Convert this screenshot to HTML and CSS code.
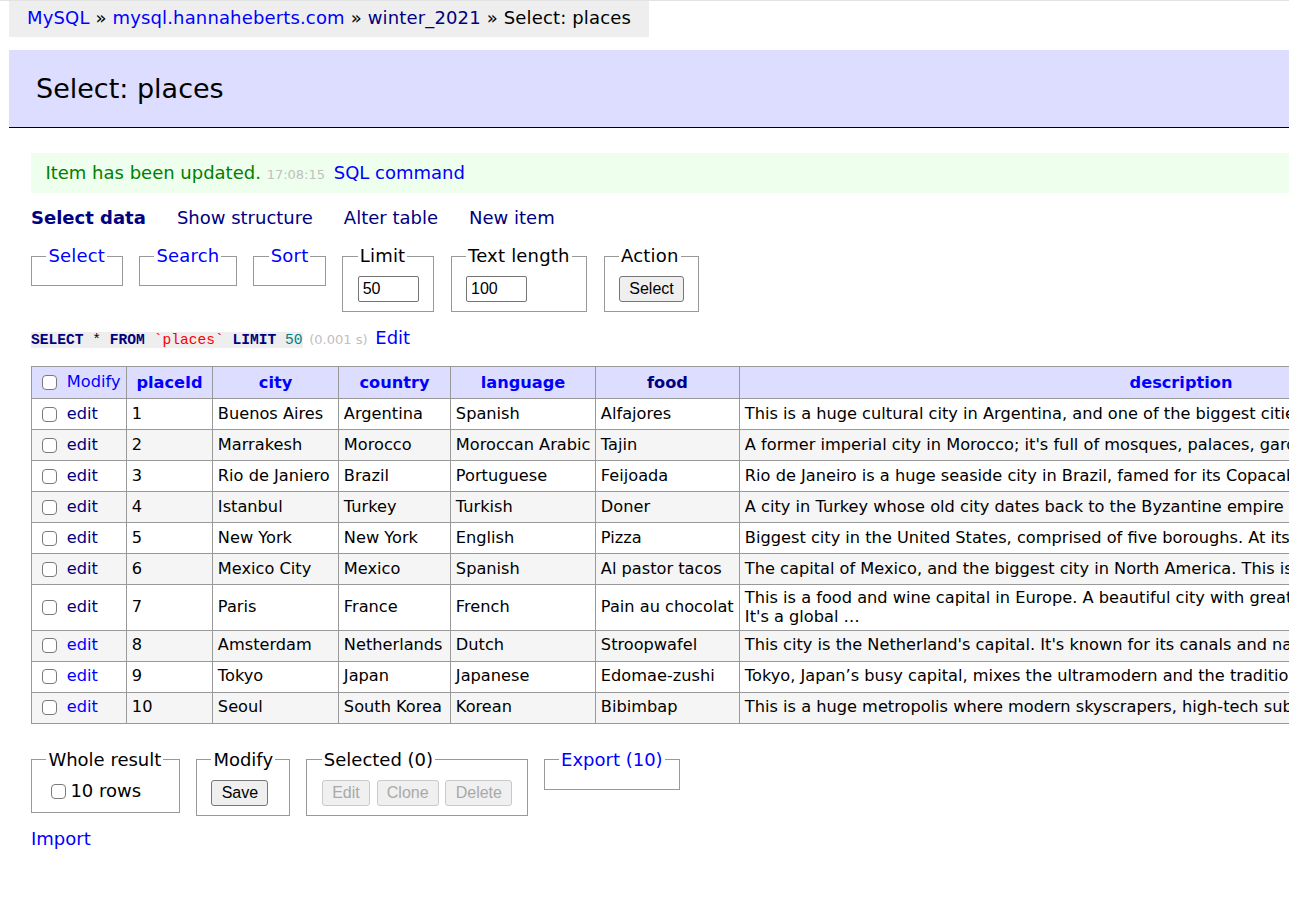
FILE: index.html
```html
<!DOCTYPE html>
<html lang="en">
<head>
<meta charset="utf-8">
<title>Select: places - Adminer</title>
<link rel="stylesheet" href="styles.css">
</head>
<body>
<p class="breadcrumb"><a href="#" class="lnk">MySQL</a> » <a href="#" class="lnk">mysql.hannaheberts.com</a> » <a href="#" class="vis">winter_2021</a> » Select: places</p>
<div class="content">
  <h2>Select: places</h2>
  <div class="message">Item has been updated. <span class="time">17:08:15</span> <a href="#" class="lnk">SQL command</a></div>
  <p class="links"><a href="#" class="vis active">Select data</a><a href="#" class="vis">Show structure</a><a href="#" class="vis">Alter table</a><a href="#" class="vis">New item</a></p>
  <form class="bar">
    <fieldset><legend><a href="#" class="lnk">Select</a></legend></fieldset>
    <fieldset><legend><a href="#" class="lnk">Search</a></legend></fieldset>
    <fieldset><legend><a href="#" class="lnk">Sort</a></legend></fieldset>
    <fieldset><legend>Limit</legend><input class="num" type="text" value="50"></fieldset>
    <fieldset><legend>Text length</legend><input class="num" type="text" value="100"></fieldset>
    <fieldset><legend>Action</legend><button type="button" class="btn">Select</button></fieldset>
  </form>
  <p class="sql"><code class="jush"><a href="#" class="kw">SELECT</a> * <a href="#" class="kw">FROM</a> <span class="bac">`places`</span> <a href="#" class="kw">LIMIT</a> <span class="num-lit">50</span></code> <span class="time">(0.001 s)</span> <a href="#" class="lnk">Edit</a></p>
  <table class="data">
    <colgroup>
      <col class="c-mod"><col class="c-id"><col class="c-city"><col class="c-country"><col class="c-lang"><col class="c-food"><col class="c-desc">
    </colgroup>
    <thead>
      <tr>
        <td><input type="checkbox" class="cb"><a href="#" class="lnk">Modify</a></td>
        <th><a href="#" class="lnk">placeId</a></th>
        <th><a href="#" class="lnk">city</a></th>
        <th><a href="#" class="lnk">country</a></th>
        <th><a href="#" class="lnk">language</a></th>
        <th><a href="#" class="vis">food</a></th>
        <th><a href="#" class="lnk">description</a></th>
      </tr>
    </thead>
    <tbody>
      <tr><td><input type="checkbox" class="cb"><a href="#" class="vis">edit</a></td><td>1</td><td>Buenos Aires</td><td>Argentina</td><td>Spanish</td><td>Alfajores</td><td>This is a huge cultural city in Argentina, and one of the biggest cities in South America. Known for …</td></tr>
      <tr><td><input type="checkbox" class="cb"><a href="#" class="vis">edit</a></td><td>2</td><td>Marrakesh</td><td>Morocco</td><td>Moroccan Arabic</td><td>Tajin</td><td>A former imperial city in Morocco; it's full of mosques, palaces, gardens and busy souks to explore …</td></tr>
      <tr><td><input type="checkbox" class="cb"><a href="#" class="vis">edit</a></td><td>3</td><td>Rio de Janiero</td><td>Brazil</td><td>Portuguese</td><td>Feijoada</td><td>Rio de Janeiro is a huge seaside city in Brazil, famed for its Copacabana and Ipanema beaches, th…</td></tr>
      <tr><td><input type="checkbox" class="cb"><a href="#" class="vis">edit</a></td><td>4</td><td>Istanbul</td><td>Turkey</td><td>Turkish</td><td>Doner</td><td>A city in Turkey whose old city dates back to the Byzantine empire and the Ottoman empire. It is …</td></tr>
      <tr><td><input type="checkbox" class="cb"><a href="#" class="vis">edit</a></td><td>5</td><td>New York</td><td>New York</td><td>English</td><td>Pizza</td><td>Biggest city in the United States, comprised of five boroughs. At its heart is Manhattan, a den…</td></tr>
      <tr><td><input type="checkbox" class="cb"><a href="#" class="vis">edit</a></td><td>6</td><td>Mexico City</td><td>Mexico</td><td>Spanish</td><td>Al pastor tacos</td><td>The capital of Mexico, and the biggest city in North America. This is a city full of history a…</td></tr>
      <tr><td><input type="checkbox" class="cb"><a href="#" class="vis">edit</a></td><td>7</td><td>Paris</td><td>France</td><td>French</td><td>Pain au chocolat</td><td>This is a food and wine capital in Europe. A beautiful city with great museums and architecture.<br>It's a global …</td></tr>
      <tr><td><input type="checkbox" class="cb"><a href="#" class="lnk">edit</a></td><td>8</td><td>Amsterdam</td><td>Netherlands</td><td>Dutch</td><td>Stroopwafel</td><td>This city is the Netherland's capital. It's known for its canals and narrow houses, and its muse…</td></tr>
      <tr><td><input type="checkbox" class="cb"><a href="#" class="lnk">edit</a></td><td>9</td><td>Tokyo</td><td>Japan</td><td>Japanese</td><td>Edomae-zushi</td><td>Tokyo, Japan’s busy capital, mixes the ultramodern and the traditional, from neon-lit skyscrap…</td></tr>
      <tr><td><input type="checkbox" class="cb"><a href="#" class="lnk">edit</a></td><td>10</td><td>Seoul</td><td>South Korea</td><td>Korean</td><td>Bibimbap</td><td>This is a huge metropolis where modern skyscrapers, high-tech subways and pop culture meet Buddh…</td></tr>
    </tbody>
  </table>
  <div class="footer">
    <fieldset><legend>Whole result</legend><label class="all"><input type="checkbox" class="cb cb-all">10 rows</label></fieldset>
    <fieldset><legend>Modify</legend><button type="button" class="btn">Save</button></fieldset>
    <fieldset><legend>Selected (0)</legend><div class="btns"><button type="button" class="btn" disabled>Edit</button><button type="button" class="btn" disabled>Clone</button><button type="button" class="btn" disabled>Delete</button></div></fieldset>
    <fieldset><legend><a href="#" class="lnk">Export (10)</a></legend></fieldset>
  </div>
  <p class="import"><a href="#" class="lnk">Import</a></p>
</div>
</body>
</html>
```
FILE: styles.css
```css
html {
  overflow: hidden;
}

body {
  margin: 0;
  border-top: 1px solid #e2e2e2;
  font: 18px/1.25 "DejaVu Sans", Verdana, sans-serif;
  color: #000;
  background: #fff;
  width: max-content;
}

a {
  text-decoration: none;
}

.lnk {
  color: #00f;
}

.vis {
  color: #000080;
}

.breadcrumb {
  margin: 0 0 0 9px;
  width: fit-content;
  height: 36px;
  line-height: 33px;
  padding: 0 18px;
  background: #eee;
  white-space: nowrap;
  letter-spacing: 0.15px;
}

.content {
  padding: 13px 0 20px 31px;
}

h2 {
  margin: 0 0 25px -22px;
  padding: 21.6px 27px;
  font-size: 27px;
  line-height: 1.25;
  font-weight: normal;
  background: #ddf;
  border-bottom: 1px solid #000;
}

.message {
  color: #008000;
  background: #efe;
  padding: 9px 14.4px;
  margin-right: 25px;
}

.time {
  color: #c0c0c0;
  font-size: 13px;
}

.message .lnk {
  margin-left: 3px;
}

.links {
  margin: 13.4px 0 0;
}

.links a {
  margin-right: 31px;
  white-space: nowrap;
}

.active {
  font-weight: bold;
}

.bar,
.footer {
  display: flex;
  align-items: flex-start;
  gap: 16.5px;
}

.bar {
  margin: 15.6px 0 0;
}

fieldset {
  margin: 0;
  padding: 9px 14.4px;
  border: 1px solid #999;
  min-width: 0;
}

legend {
  padding: 0 2px;
}

.bar legend {
  letter-spacing: 0.2px;
}

.num {
  box-sizing: border-box;
  width: 61px;
  height: 26px;
  margin: 0;
  padding: 1px 4px;
  border: 1px solid #767676;
  border-radius: 2px;
  font: 16px "Liberation Sans", Arial, sans-serif;
  color: #000;
  display: block;
}

.btn {
  box-sizing: border-box;
  height: 26px;
  margin: 0;
  padding: 0 9.3px;
  border: 1px solid #767676;
  border-radius: 3px;
  background: #efefef;
  font: 16px "Liberation Sans", Arial, sans-serif;
  color: #000;
  display: block;
}

.btn:disabled {
  border-color: #c9c9c9;
  background: #f0f0f0;
  color: #a9a9a9;
}

.btns {
  display: flex;
  gap: 6.5px;
}

.sql {
  margin: 15px 0 0;
}

.jush {
  background: #eee;
  font: 14.6px "Liberation Mono", "Courier New", monospace;
}

.sql .time {
  margin-left: 1px;
}

.sql > .lnk {
  margin-left: 2px;
}

.kw {
  color: #000080;
  font-weight: bold;
}

.bac {
  color: red;
}

.num-lit {
  color: #007f7f;
}

.data {
  margin-top: 16.2px;
  border-collapse: collapse;
  table-layout: fixed;
  width: 1591px;
  font-size: 16.2px;
  line-height: 19px;
}

.c-mod { width: 95px; }
.c-id { width: 86px; }
.c-city { width: 126px; }
.c-country { width: 112px; }
.c-lang { width: 145px; }
.c-food { width: 144px; }
.c-desc { width: 883px; }

.data td,
.data th {
  border: 1px solid #999;
  padding: 2.5px 4.86px 4px;
  white-space: nowrap;
  overflow: hidden;
  text-align: left;
}

.data thead th {
  text-align: center;
  padding: 3.24px 8.1px;
}

.data thead td,
.data thead th {
  background: #ddf;
}

.data thead tr {
  height: 32px;
}

.data tbody tr {
  height: 31px;
}

.data tbody tr:nth-child(even) {
  background: #f5f5f5;
}

.cb {
  appearance: none;
  -webkit-appearance: none;
  box-sizing: border-box;
  width: 15px;
  height: 15px;
  margin: 0 10px 0 5px;
  border: 1px solid #7a7a7a;
  border-radius: 4px;
  background: #fff;
  vertical-align: middle;
  position: relative;
  top: 0;
}

.footer {
  margin-top: 25px;
  gap: 16px;
}

.footer > fieldset:nth-child(1) {
  min-width: 149px;
  box-sizing: border-box;
}

.all {
  display: flex;
  align-items: center;
}

.cb-all {
  margin: 1px 4px 0 5px;
}

.import {
  margin: 12px 0 0;
}
```
